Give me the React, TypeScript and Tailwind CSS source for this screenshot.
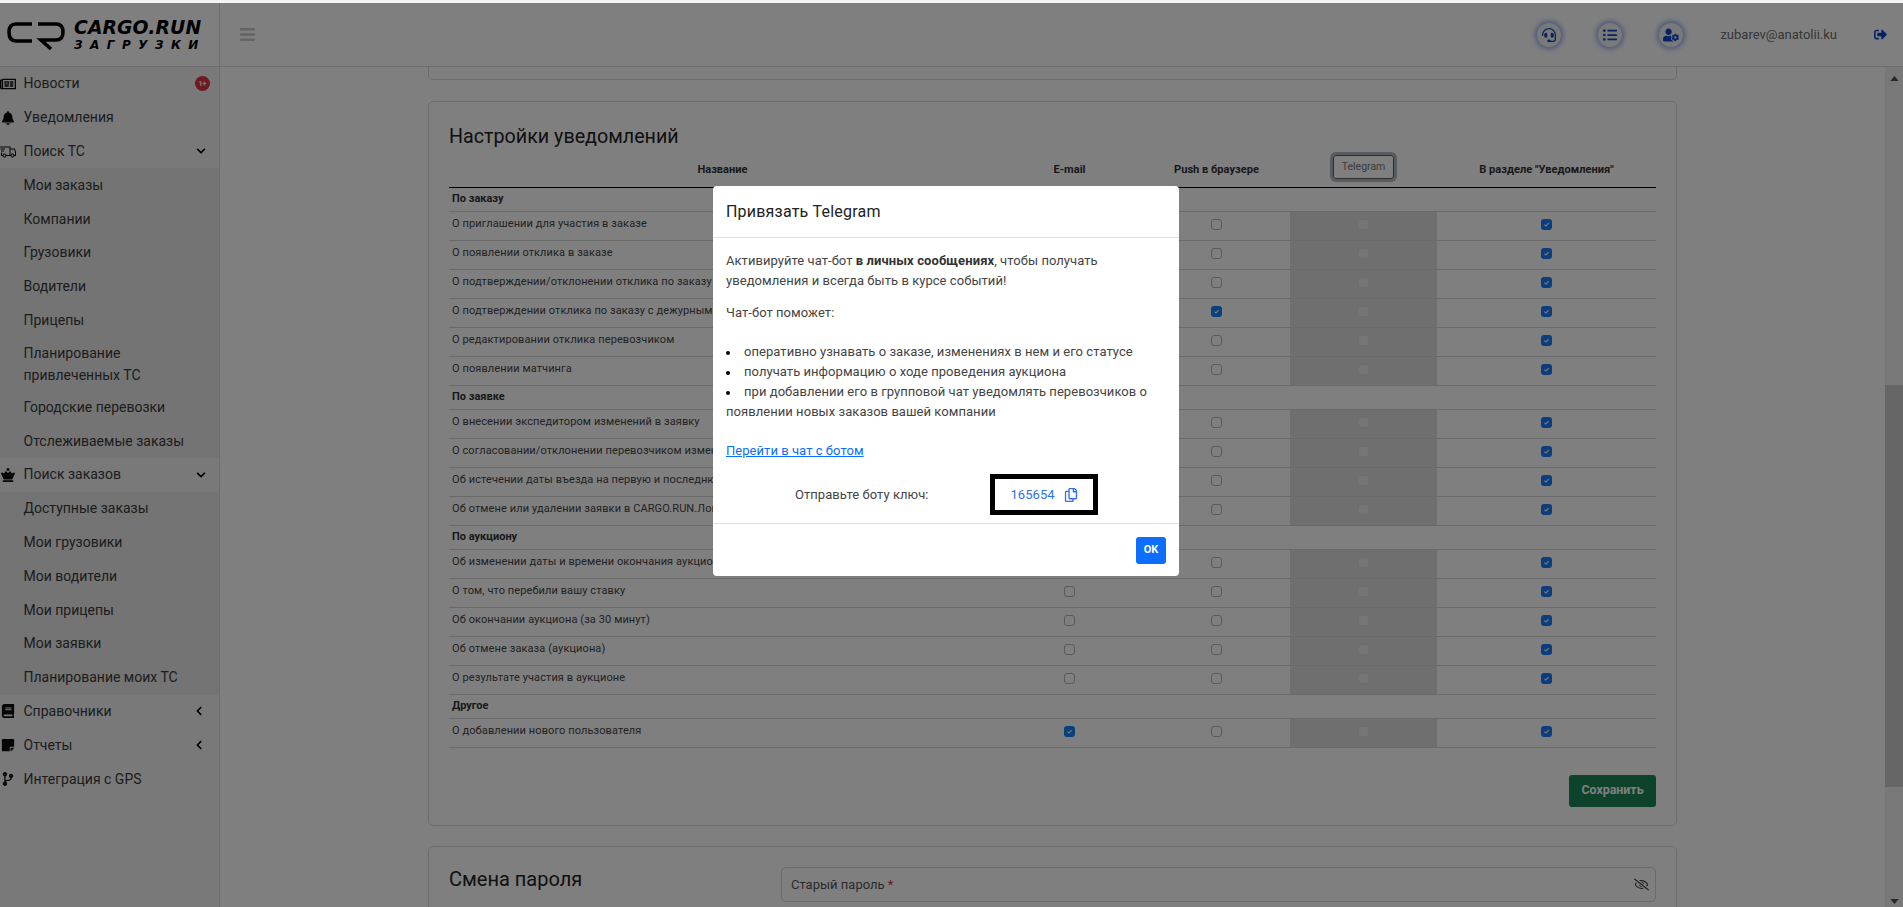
import React from "react";
import {
  FaRegNewspaper, FaBell, FaChessQueen, FaBook, FaStickyNote, FaCodeBranch,
  FaChevronDown, FaChevronLeft, FaBars, FaHeadset, FaListUl, FaUserCog, FaSignOutAlt, FaRegCopy, FaRegEyeSlash,
} from "react-icons/fa";
import { LiaShippingFastSolid } from "react-icons/lia";

type Row = { t: string; group?: boolean; email?: boolean; push?: boolean };
const rows: Row[] = [
  { t: "По заказу", group: true },
  { t: "О приглашении для участия в заказе" },
  { t: "О появлении отклика в заказе" },
  { t: "О подтверждении/отклонении отклика по заказу" },
  { t: "О подтверждении отклика по заказу с дежурным", push: true },
  { t: "О редактировании отклика перевозчиком" },
  { t: "О появлении матчинга" },
  { t: "По заявке", group: true },
  { t: "О внесении экспедитором изменений в заявку" },
  { t: "О согласовании/отклонении перевозчиком изменений" },
  { t: "Об истечении даты въезда на первую и последнюю точки" },
  { t: "Об отмене или удалении заявки в CARGO.RUN.Логистика" },
  { t: "По аукциону", group: true },
  { t: "Об изменении даты и времени окончания аукциона" },
  { t: "О том, что перебили вашу ставку" },
  { t: "Об окончании аукциона (за 30 минут)" },
  { t: "Об отмене заказа (аукциона)" },
  { t: "О результате участия в аукционе" },
  { t: "Другое", group: true },
  { t: "О добавлении нового пользователя", email: true },
];

function Check({ on, disabled }: { on?: boolean; disabled?: boolean }) {
  if (on)
    return (
      <span className="mx-auto flex h-[11px] w-[11px] items-center justify-center rounded-[3px] bg-[#167cf8]">
        <svg viewBox="0 0 10 10" className="h-[7px] w-[7px]">
          <path d="M2 5.2 L4.2 7.2 L8 3" fill="none" stroke="#fff" strokeWidth="1.5" />
        </svg>
      </span>
    );
  return (
    <span
      className={
        disabled
          ? "mx-auto block h-[11px] w-[11px] rounded-[3px] border border-[#dcdcdc] bg-[#ececec]"
          : "mx-auto block h-[11px] w-[11px] rounded-[3px] border border-[#b4b4b4] bg-white"
      }
    />
  );
}

function SideItem({ icon, label, right, tall }: { icon?: React.ReactNode; label: string; right?: React.ReactNode; tall?: boolean }) {
  return (
    <div className={`relative flex items-center pl-[23.5px] ${tall ? "h-[53px] leading-[22px]" : "h-[33.8px]"}`}>
      {icon && <span className="absolute top-0 left-0 flex h-full w-[16px] items-center justify-center text-[14px] text-[#0c0c0c]">{icon}</span>}
      <span className="text-[14px] text-[#3a3a3a]">{label}</span>
      {right}
    </div>
  );
}

const Down = <FaChevronDown className="absolute right-[13px] text-[10px] text-black" />;
const Left = <FaChevronLeft className="absolute right-[15px] text-[10px] text-black" />;

function Circle({ children }: { children: React.ReactNode }) {
  return (
    <span className="flex h-[24px] w-[24px] items-center justify-center rounded-full bg-[#f2f2f2] text-[14px] text-[#0d47c9] shadow-[0_0_5px_2px_rgba(50,90,230,0.5)]">
      {children}
    </span>
  );
}

export default function App() {
  return (
    <div className="flex h-[907px] w-[1903px] flex-col overflow-hidden bg-white font-['Roboto',sans-serif]">
      <div className="h-[3px] shrink-0 bg-[#f5f5f5]" />
      <div className="relative flex min-h-0 flex-1 flex-col">
        {/* header */}
        <header className="flex h-[64px] shrink-0 border-b border-[#dcdcdc]">
          <div className="flex w-[220px] shrink-0 items-center gap-[9px] border-r border-[#dcdcdc] pl-[7px]">
            <svg viewBox="0 0 58 30" className="mt-[5px] h-[30px] w-[58px] shrink-0">
              <path d="M25 2 H9 Q2 2 2 10 Q2 19 9 19 H25" fill="none" stroke="#000" strokeWidth="3.6" />
              <path d="M31 2 H49 Q56 2 56 10 Q56 18 49 18 H34 L44 27" fill="none" stroke="#000" strokeWidth="3.6" />
            </svg>
            <div className="flex flex-col font-['DejaVu_Sans',sans-serif] font-bold text-black italic">
              <span className="text-[18.8px] leading-[20px] tracking-[0.1px]">CARGO.RUN</span>
              <span className="text-[12px] leading-[14px] tracking-[7.5px]">ЗАГРУЗКИ</span>
            </div>
          </div>
          <div className="flex flex-1 items-center pl-[19px]">
            <FaBars className="text-[17px] text-[#c8c8c8]" />
            <div className="ml-auto flex items-center">
              <Circle><FaHeadset /></Circle>
              <span className="ml-[37px]"><Circle><FaListUl /></Circle></span>
              <span className="ml-[37px]"><Circle><FaUserCog className="text-[16px]" /></Circle></span>
              <span className="ml-[37px] text-[13px] text-[#6e6e6e]">zubarev@anatolii.ku</span>
              <FaSignOutAlt className="mr-[16px] ml-[37px] text-[13px] text-[#0d47c9]" />
            </div>
          </div>
        </header>

        <div className="flex min-h-0 flex-1">
          {/* sidebar */}
          <aside className="w-[220px] shrink-0 border-r border-[#dcdcdc] bg-[#f3f3f3]">
            <SideItem icon={<FaRegNewspaper className="text-[16px]" />} label="Новости" right={
              <span className="absolute right-[9px] flex h-[15px] w-[15px] items-center justify-center rounded-full bg-[#dc3545] text-[7px] font-bold text-white">1+</span>
            } />
            <SideItem icon={<FaBell />} label="Уведомления" />
            <SideItem icon={<LiaShippingFastSolid className="text-[17px]" />} label="Поиск ТС" right={Down} />
            <div className="bg-[#e9e9e9]">
              <SideItem label="Мои заказы" />
              <SideItem label="Компании" />
              <SideItem label="Грузовики" />
              <SideItem label="Водители" />
              <SideItem label="Прицепы" />
              <SideItem tall label="Планирование привлеченных ТС" />
              <SideItem label="Городские перевозки" />
              <SideItem label="Отслеживаемые заказы" />
            </div>
            <SideItem icon={<FaChessQueen />} label="Поиск заказов" right={Down} />
            <div className="bg-[#e9e9e9]">
              <SideItem label="Доступные заказы" />
              <SideItem label="Мои грузовики" />
              <SideItem label="Мои водители" />
              <SideItem label="Мои прицепы" />
              <SideItem label="Мои заявки" />
              <SideItem label="Планирование моих ТС" />
            </div>
            <SideItem icon={<FaBook />} label="Справочники" right={Left} />
            <SideItem icon={<FaStickyNote />} label="Отчеты" right={Left} />
            <SideItem icon={<FaCodeBranch />} label="Интеграция с GPS" />
          </aside>

          {/* content */}
          <main className="flex min-w-0 flex-1 flex-col overflow-hidden pr-[208px] pl-[208px]">
            <div className="h-[13px] w-[1249px] shrink-0 rounded-b-[5px] border border-t-0 border-[#d8d8d8]" />
            <section className="mt-[21px] h-[725px] w-[1249px] shrink-0 rounded-[5px] border border-[#d8d8d8] px-[20px]">
              <h2 className="mt-[22px] h-[25px] text-[19.7px] leading-[25px] font-normal text-[#222]">Настройки уведомлений</h2>
              <table className="w-[1207px] table-fixed border-collapse leading-[14px]">
                <colgroup>
                  <col className="w-[547px]" />
                  <col className="w-[147px]" />
                  <col className="w-[147px]" />
                  <col className="w-[147px]" />
                  <col className="w-[219px]" />
                </colgroup>
                <thead>
                  <tr className="h-[38px] border-b-[1.5px] border-[#000] text-[11.1px] font-bold text-[#333]">
                    <th className="pt-[4px]">Название</th>
                    <th className="pt-[4px]">E-mail</th>
                    <th className="pt-[4px]">Push в браузере</th>
                    <th className="pb-[1px] font-normal">
                      <span className="inline-block rounded-[3px] border border-[#5a5a5a] px-[8px] py-[4px] text-[10.5px] leading-[14px] text-[#777] shadow-[0_0_0_3px_rgba(100,110,130,0.5)]">Telegram</span>
                    </th>
                    <th className="pt-[4px]">В разделе "Уведомления"</th>
                  </tr>
                </thead>
                <tbody>
                  {rows.map((r) =>
                    r.group ? (
                      <tr key={r.t} className="h-[24px] border-b border-[#d4d4d4]">
                        <td colSpan={5} className="pl-[3px] text-[11px] font-bold text-[#333]">{r.t}</td>
                      </tr>
                    ) : (
                      <tr key={r.t} className="h-[29px] border-b border-[#d4d4d4]">
                        <td className="pb-[3px] pl-[3px] text-[11px] tracking-[0.1px] whitespace-nowrap text-[#444]">{r.t}</td>
                        <td className="pb-[3px]"><Check on={r.email} /></td>
                        <td className="pb-[3px]"><Check on={r.push} /></td>
                        <td className="bg-[#dedede] pb-[3px]"><Check disabled /></td>
                        <td className="pb-[3px]"><Check on /></td>
                      </tr>
                    )
                  )}
                </tbody>
              </table>
              <div className="mt-[27px] flex justify-end">
                <button className="h-[32px] w-[87px] rounded-[3px] bg-[#198754] text-[12.4px] font-bold text-white">Сохранить</button>
              </div>
            </section>
            <section className="mt-[20px] flex h-[120px] w-[1249px] shrink-0 rounded-t-[5px] border border-[#d8d8d8] px-[20px] pt-[20px]">
              <h2 className="w-[332px] shrink-0 text-[20px] leading-[25px] font-normal text-[#222]">Смена пароля</h2>
              <div className="flex h-[35px] flex-1 items-center rounded-[5px] border border-[#d4d4d4] pr-[6px] pl-[9px]">
                <span className="text-[13px] text-[#555]">Старый пароль <span className="text-[#dc3545]">*</span></span>
                <FaRegEyeSlash className="ml-auto text-[15px] text-[#444]" />
              </div>
            </section>
          </main>

          {/* scrollbar */}
          <div className="relative -ml-[18px] flex w-[18px] shrink-0 flex-col items-center bg-[#f1f1f1]">
            <svg viewBox="0 0 10 6" className="mt-[9px] h-[5px] w-[9px]"><polygon points="5,0 10,6 0,6" fill="#505050" /></svg>
            <div className="mt-[304px] h-[402px] w-full bg-[#cdcdcd]" />
            <svg viewBox="0 0 10 6" className="mt-auto mb-[3px] h-[5px] w-[9px]"><polygon points="0,0 10,0 5,6" fill="#505050" /></svg>
          </div>
        </div>

        {/* backdrop */}
        <div className="absolute inset-0 bg-black/50" />

        {/* modal */}
        <div className="absolute top-[183px] left-[713px] w-[466px] rounded-[4px] bg-white text-[13px] text-[#444]">
          <div className="flex h-[52px] items-center border-b border-[#dee2e6] px-[13px] text-[16px] tracking-[0.2px] text-[#222]">Привязать Telegram</div>
          <div className="px-[13px] pt-[13px] leading-[20px] tracking-[0.05px]">
            <p>Активируйте чат-бот <b className="tracking-[0.1px] text-[#333]">в личных сообщениях</b>, чтобы получать уведомления и всегда быть в курсе событий!</p>
            <p className="mt-[12px]">Чат-бот поможет:</p>
            <p className="mt-[19px]"><span className="mr-[14px] inline-block h-[4px] w-[4px] rounded-full bg-black align-middle" />оперативно узнавать о заказе, изменениях в нем и его статусе</p>
            <p><span className="mr-[14px] inline-block h-[4px] w-[4px] rounded-full bg-black align-middle" />получать информацию о ходе проведения аукциона</p>
            <p><span className="mr-[14px] inline-block h-[4px] w-[4px] rounded-full bg-black align-middle" />при добавлении его в групповой чат уведомлять перевозчиков о появлении новых заказов вашей компании</p>
            <a className="mt-[19px] block text-[#0d6efd] underline">Перейти в чат с ботом</a>
            <div className="mt-[13px] flex items-center pl-[69px]">
              <span>Отправьте боту ключ:</span>
              <span className="ml-[61px] flex h-[41px] w-[108px] items-center justify-center gap-[9px] border-[5px] border-black pl-[1px] text-[#2f6fed]">
                165654 <FaRegCopy className="text-[14px]" />
              </span>
            </div>
          </div>
          <div className="mt-[8px] flex h-[53px] items-start justify-end border-t border-[#dee2e6] pt-[13px] pr-[13px]">
            <span className="flex h-[27px] w-[30px] items-center justify-center rounded-[3px] bg-[#0d6efd] text-[11px] font-bold text-white">OK</span>
          </div>
        </div>
      </div>
    </div>
  );
}
